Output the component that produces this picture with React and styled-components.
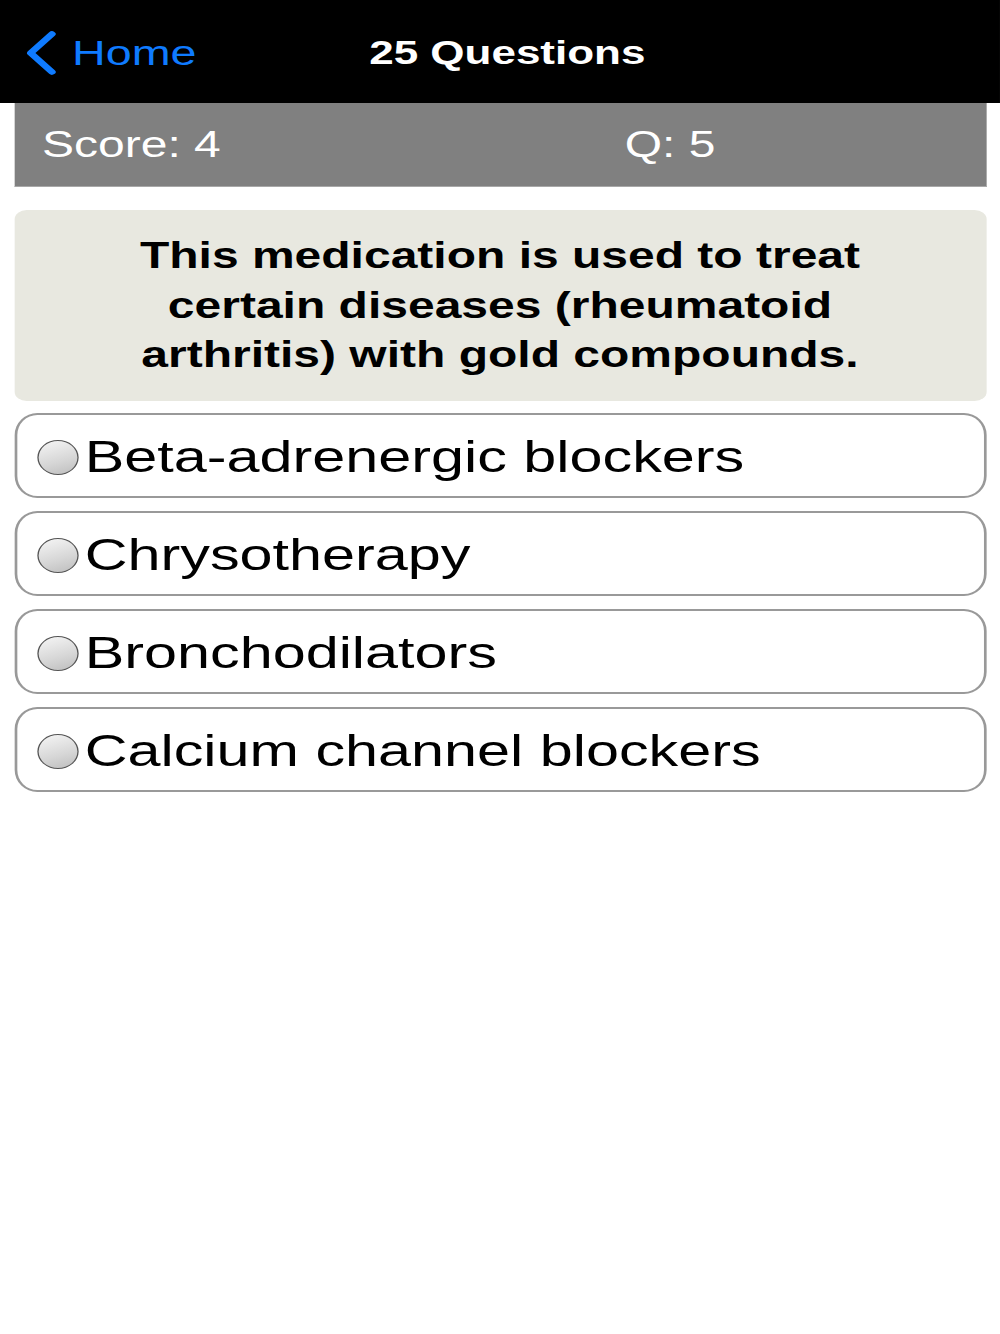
import React, { useState } from "react";
import styled, { createGlobalStyle } from "styled-components";

const GlobalStyle = createGlobalStyle`
  html, body {
    margin: 0;
    padding: 0;
    background: #ffffff;
    overflow: hidden;
  }
  body {
    font-family: "Liberation Sans", Arial, Helvetica, sans-serif;
  }
`;

// the screen is an iPhone layout (750 wide) shown stretched to 1000
const Screen = styled.div`
  width: 750px;
  min-height: 1334px;
  transform: scaleX(1.3333);
  transform-origin: 0 0;
  background: #ffffff;
`;

const NavBar = styled.header`
  height: 103px;
  background: #000000;
  display: grid;
  grid-template-columns: 1fr auto 1fr;
  align-items: center;
  padding: 0 0 0 19px;
`;

const BackButton = styled.button`
  display: flex;
  align-items: center;
  gap: 11px;
  background: none;
  border: none;
  padding: 0;
  color: #0f7bff;
  font-family: "Liberation Sans", Arial, sans-serif;
  font-size: 35px;
  cursor: pointer;
  justify-self: start;
  margin-top: 2px;
`;

const Title = styled.h1`
  margin: 3px 8px 0 0;
  color: #ffffff;
  font-size: 33px;
  font-weight: 700;
`;

const ScoreBar = styled.div`
  margin: 0 10.5px;
  height: 84px;
  background: #808080;
  border-bottom: 1px solid #a8a8a8;
  box-sizing: border-box;
  display: grid;
  grid-template-columns: 437px 1fr;
  align-items: center;
  padding-left: 21px;
  color: #ffffff;
  font-size: 36px;
`;

const QuestionCard = styled.div`
  margin: 23px 10.5px 12px;
  background: #e8e8e0;
  border-radius: 9px;
  padding: 21px 45px;
  text-align: center;
  font-size: 36px;
  font-weight: 700;
  line-height: 49.5px;
  color: #000000;
`;

const Options = styled.div`
  display: flex;
  flex-direction: column;
  gap: 13px;
  margin: 0 10.5px;
`;

const Option = styled.label`
  height: 85px;
  box-sizing: border-box;
  border: 2px solid #999999;
  border-radius: 17px / 22px;
  background: ${(p) => (p.$selected ? "#eef5ff" : "#ffffff")};
  display: flex;
  align-items: center;
  padding: 3px 0 0 15px;
  gap: 5px;
  font-size: 44.5px;
  color: #000000;
  cursor: pointer;
`;

const Radio = styled.span`
  width: 31px;
  height: 35px;
  border-radius: 50%;
  border: 1.5px solid #555555;
  box-sizing: border-box;
  flex-shrink: 0;
  margin-top: 2px;
  background: ${(p) =>
    p.$checked
      ? "radial-gradient(circle, #1a1a1a 35%, #e0e0e0 40%)"
      : "linear-gradient(160deg, #f6f6f6 0%, #d6d6d6 60%, #bdbdbd 100%)"};
`;

const Chevron = () => (
  <svg width="24" height="46" viewBox="0 0 24 46">
    <path
      d="M20 4 L4 23 L20 42"
      fill="none"
      stroke="#0f7bff"
      strokeWidth="5.5"
      strokeLinecap="round"
      strokeLinejoin="round"
    />
  </svg>
);

const answers = [
  "Beta-adrenergic blockers",
  "Chrysotherapy",
  "Bronchodilators",
  "Calcium channel blockers",
];

const App = () => {
  const [selected, setSelected] = useState(null);

  return (
    <>
      <GlobalStyle />
      <Screen>
        <NavBar>
          <BackButton>
            <Chevron />
            Home
          </BackButton>
          <Title>25 Questions</Title>
          <span />
        </NavBar>

        <ScoreBar>
          <span>Score: 4</span>
          <span>Q: 5</span>
        </ScoreBar>

        <QuestionCard>
          This medication is used to treat certain diseases (rheumatoid
          arthritis) with gold compounds.
        </QuestionCard>

        <Options>
          {answers.map((answer, i) => (
            <Option key={answer} onClick={() => setSelected(i)}>
              <Radio $checked={selected === i} />
              {answer}
            </Option>
          ))}
        </Options>
      </Screen>
    </>
  );
};

export default App;
